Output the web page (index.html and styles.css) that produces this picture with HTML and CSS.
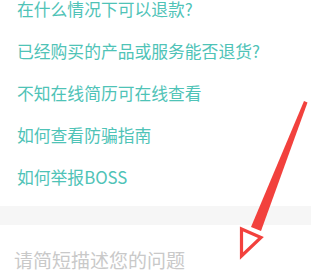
FILE: index.html
```html
<!DOCTYPE html>
<html lang="zh">
<head>
<meta charset="utf-8">
<link rel="stylesheet" href="styles.css">
</head>
<body>
<div class="page">
  <ul class="faq">
    <li>在什么情况下可以退款?</li>
    <li>已经购买的产品或服务能否退货?</li>
    <li>不知在线简历可在线查看</li>
    <li>如何查看防骗指南</li>
    <li>如何举报BOSS</li>
  </ul>
  <div class="divider"></div>
  <div class="input">请简短描述您的问题</div>
  <svg class="arrow" width="311" height="278" viewBox="0 0 311 278">
    <polygon points="304,101 307.5,102.5 261,231 251,227" fill="#f2413d"/>
    <polygon points="241.5,229 261,237.5 241.5,256" fill="none" stroke="#f2413d" stroke-width="3.2" stroke-linejoin="miter"/>
  </svg>
</div>
</body>
</html>
```
FILE: styles.css
```css
html, body {
  margin: 0;
  padding: 0;
  background: #ffffff;
}
.page {
  position: relative;
  width: 311px;
  height: 278px;
  overflow: hidden;
  font-family: "Noto Sans CJK SC", "Noto Sans", sans-serif;
}
.faq {
  list-style: none;
  margin: 0;
  padding: 0 0 0 17px;
  display: flex;
  flex-direction: column;
  gap: 24px;
}
.faq li {
  height: 18px;
  line-height: 18px;
  font-size: 16.8px;
  color: #4fc3b7;
  white-space: nowrap;
}
.divider {
  margin-top: 20px;
  height: 19px;
  background: #f6f6f6;
}
.input {
  padding: 0 0 0 14px;
  height: 70px;
  line-height: 70px;
  font-size: 19px;
  color: #c9c9c9;
}
.arrow {
  position: absolute;
  left: 0;
  top: 0;
}
```
